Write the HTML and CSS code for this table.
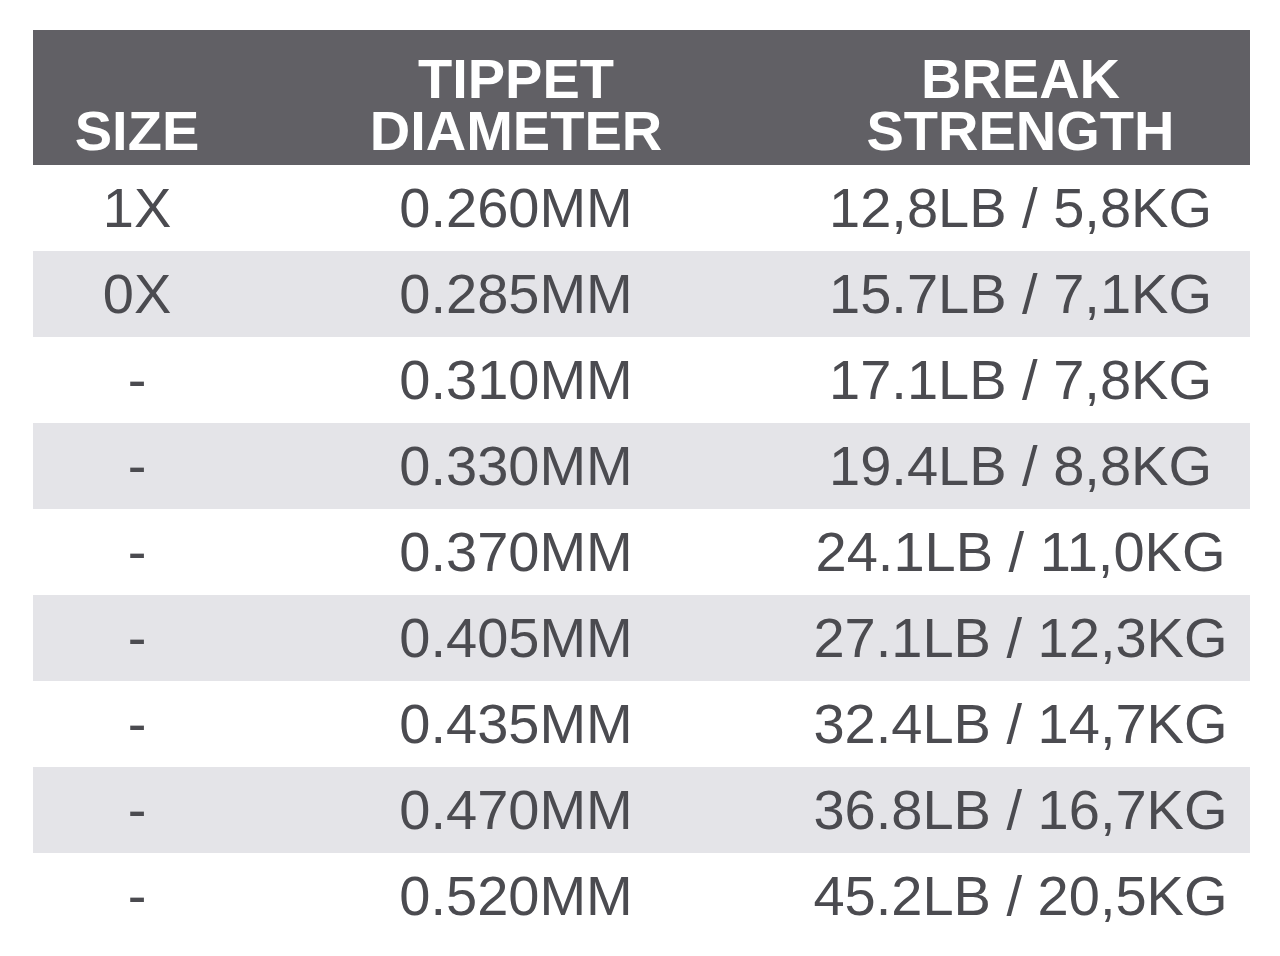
FILE: index.html
```html
<!DOCTYPE html>
<html>
<head>
<meta charset="utf-8">
<link rel="stylesheet" href="styles.css">
</head>
<body>
<table class="spec">
  <colgroup><col class="c1"><col class="c2"><col class="c3"></colgroup>
  <thead>
    <tr><th>SIZE</th><th>TIPPET<br>DIAMETER</th><th>BREAK<br>STRENGTH</th></tr>
  </thead>
  <tbody>
    <tr><td>1X</td><td>0.260MM</td><td>12,8LB / 5,8KG</td></tr>
    <tr><td>0X</td><td>0.285MM</td><td>15.7LB / 7,1KG</td></tr>
    <tr><td>-</td><td>0.310MM</td><td>17.1LB / 7,8KG</td></tr>
    <tr><td>-</td><td>0.330MM</td><td>19.4LB / 8,8KG</td></tr>
    <tr><td>-</td><td>0.370MM</td><td>24.1LB / 11,0KG</td></tr>
    <tr><td>-</td><td>0.405MM</td><td>27.1LB / 12,3KG</td></tr>
    <tr><td>-</td><td>0.435MM</td><td>32.4LB / 14,7KG</td></tr>
    <tr><td>-</td><td>0.470MM</td><td>36.8LB / 16,7KG</td></tr>
    <tr><td>-</td><td>0.520MM</td><td>45.2LB / 20,5KG</td></tr>
  </tbody>
</table>
</body>
</html>
```
FILE: styles.css
```css
html, body {
  margin: 0;
  padding: 0;
  background: #ffffff;
}
body {
  padding: 30px 0 0 33px;
  font-family: "Liberation Sans", Arial, Helvetica, sans-serif;
}
.spec {
  border-collapse: collapse;
  border-spacing: 0;
  table-layout: fixed;
  width: 1217px;
}
.c1 { width: 208px; }
.c2 { width: 550px; }
.c3 { width: 459px; }
.spec th {
  background: #616065;
  color: #ffffff;
  font-weight: bold;
  font-size: 56px;
  line-height: 52px;
  height: 135px;
  padding: 0 0 8px 0;
  box-sizing: border-box;
  vertical-align: bottom;
  text-align: center;
}
.spec td {
  height: 86px;
  padding: 0;
  box-sizing: border-box;
  font-size: 56px;
  line-height: 86px;
  color: #4b4b50;
  text-align: center;
  vertical-align: middle;
}
.spec tbody tr:nth-child(even) td {
  background: #e4e4e8;
}
```
